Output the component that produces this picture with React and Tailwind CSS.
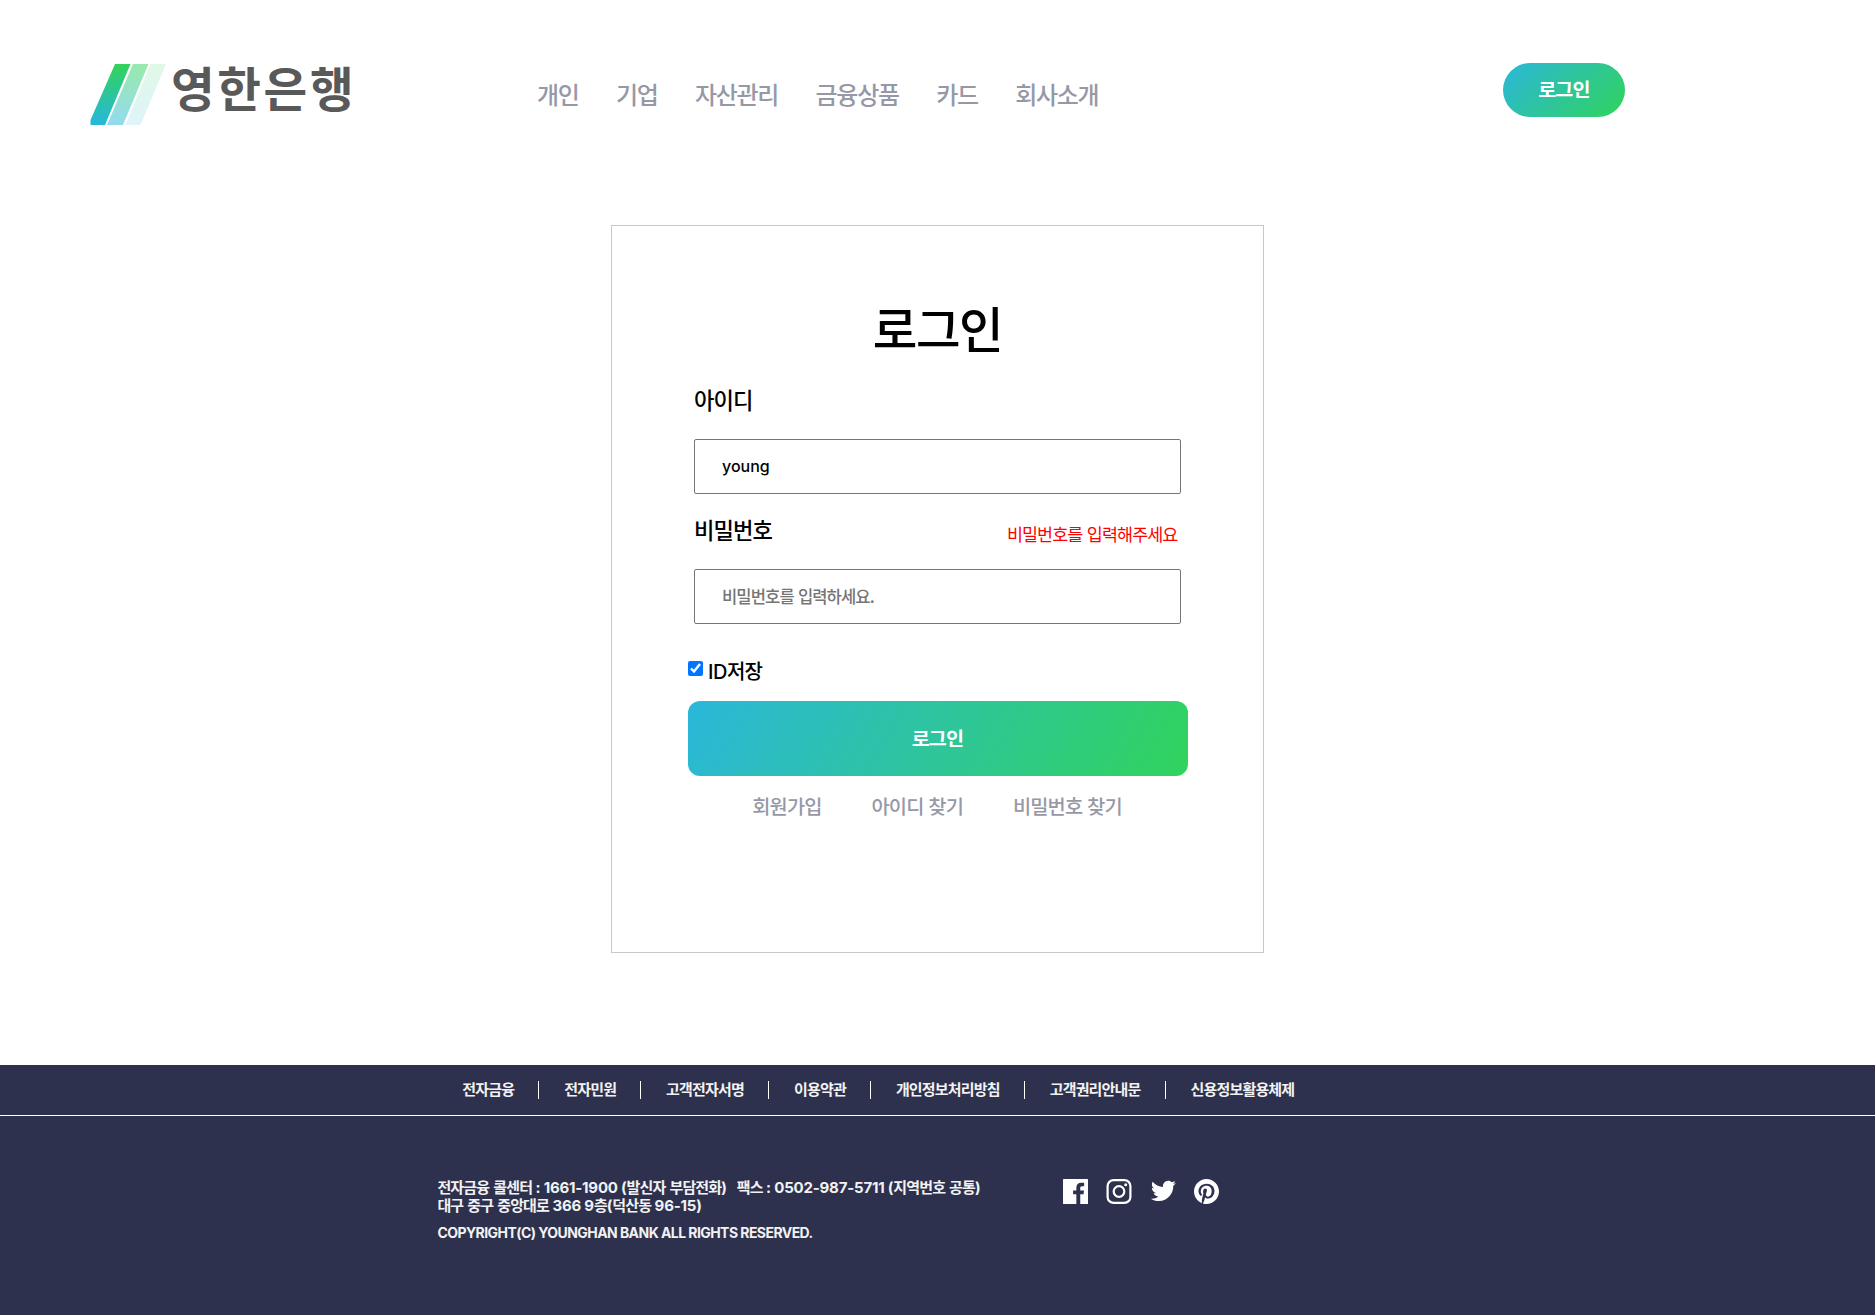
import React from "react";

const navItems = ["개인", "기업", "자산관리", "금융상품", "카드", "회사소개"];

const footerLinks = [
  "전자금융",
  "전자민원",
  "고객전자서명",
  "이용약관",
  "개인정보처리방침",
  "고객권리안내문",
  "신용정보활용체제",
];

function Logo() {
  return (
    <a href="#" className="flex items-start">
      <svg width="78" height="64" viewBox="0 0 78 64" className="block">
        <defs>
          <linearGradient id="stripe" x1="0" y1="0" x2="0" y2="1">
            <stop offset="0" stopColor="#32d35b" />
            <stop offset="1" stopColor="#27b7dc" />
          </linearGradient>
        </defs>
        <path d="M25 1H40.5L15 62H0.5V57Z" fill="url(#stripe)" />
        <path d="M43 1H58.5L33 62H17Z" fill="url(#stripe)" opacity="0.5" />
        <path d="M60.5 1H76L50.5 62H35.5Z" fill="url(#stripe)" opacity="0.15" />
      </svg>
      <span className="ml-[3px] mt-[-4px] text-[47.5px] leading-[56px] font-bold tracking-[2.6px] text-[#595959]">
        영한은행
      </span>
    </a>
  );
}

function Header() {
  return (
    <header className="flex h-[225px] items-start">
      <div className="ml-[90px] mt-[63px] w-[447px]">
        <Logo />
      </div>
      <nav className="mt-[77px] flex gap-[37.5px] text-[24px] leading-[34px] font-medium tracking-[-0.055em] text-[#9698a6]">
        {navItems.map((t) => (
          <a key={t} href="#">{t}</a>
        ))}
      </nav>
      <button className="mt-[63px] mr-[250px] ml-auto h-[54px] w-[122px] rounded-full bg-[linear-gradient(135deg,#2bb7da,#31d35c)] pb-[2px] text-[19.6px] font-bold tracking-[-0.04em] text-white">
        로그인
      </button>
    </header>
  );
}

function LoginCard() {
  return (
    <main className="mx-auto h-[728px] w-[653px] border border-[#c8c8c8]">
      <form className="mx-auto w-[500px] pt-[66px] tracking-[-0.055em] [word-spacing:0.08em]">
        <h1 className="text-center text-[48.5px] leading-[70px] font-medium tracking-[-0.03em] text-black">로그인</h1>
        <div className="mx-[6px]">
          <label className="mt-[22px] ml-[0.5px] block text-[22.2px] leading-[30px] font-medium text-black">아이디</label>
          <input
            type="text"
            defaultValue="young"
            className="mt-[25px] block h-[55px] w-[487px] rounded-[2px] border border-[#767676] pb-[2px] pl-[27.5px] font-['Inter'] text-[16px] font-medium tracking-normal text-black"
          />
          <div className="mt-[20px] flex items-start justify-between">
            <label className="ml-[0.5px] text-[22.2px] leading-[30px] font-medium text-black">비밀번호</label>
            <span className="mt-[6px] mr-[4px] text-[17.4px] leading-[28px] text-[#ff0000]">비밀번호를 입력해주세요</span>
          </div>
          <input
            type="password"
            placeholder="비밀번호를 입력하세요."
            className="mt-[21px] block h-[55px] w-[487px] rounded-[2px] border border-[#767676] pb-[2px] pl-[27.5px] text-[16.6px] font-medium tracking-[-0.055em] text-black [word-spacing:0.08em] placeholder:text-[#757575]"
          />
        </div>
        <label className="mt-[31px] flex h-[31px] items-start text-black">
          <input type="checkbox" defaultChecked className="mt-[6px] h-[15px] w-[15px]" />
          <span className="mt-[1px] ml-[5.5px] text-[20px] leading-[30px] font-medium">
            <span className="font-['Inter'] text-[20px] tracking-[-0.02em]">ID</span>저장
          </span>
        </label>
        <button
          type="button"
          className="mt-[15px] block h-[75px] w-full rounded-[12px] bg-[linear-gradient(120deg,#2bb7da,#31d35c)] pb-[2px] text-[19.6px] font-bold tracking-[-0.04em] text-white"
        >
          로그인
        </button>
        <div className="mt-[15px] flex justify-center gap-[50px] pr-[1px] text-[19.8px] leading-[30px] font-medium text-[#9698a6]">
          <a href="#">회원가입</a>
          <a href="#">아이디 찾기</a>
          <a href="#">비밀번호 찾기</a>
        </div>
      </form>
    </main>
  );
}

function FacebookIcon() {
  return (
    <svg width="25" height="25" viewBox="0 0 24 24" fill="#fff">
      <path d="M23.4 0H.6C.3 0 0 .3 0 .6v22.8c0 .3.3.6.6.6h12.22v-9.294H9.692v-3.622h3.128V8.413c0-3.1 1.893-4.788 4.659-4.788 1.325 0 2.463.099 2.795.143v3.24l-1.918.001c-1.504 0-1.795.715-1.795 1.763v2.313h3.587l-.467 3.622h-3.12V24h6.84c.3 0 .6-.3.6-.6V.6c0-.3-.3-.6-.6-.6z" />
    </svg>
  );
}

function InstagramIcon() {
  return (
    <svg width="25" height="25" viewBox="0.5 0 25 25" fill="none" stroke="#fff" className="overflow-visible">
      <rect x="1.1" y="1.1" width="22.8" height="22.8" rx="6" strokeWidth="2.2" />
      <circle cx="12.5" cy="12.5" r="5.3" strokeWidth="2.2" />
      <circle cx="19.2" cy="5.8" r="1.5" fill="#fff" stroke="none" />
    </svg>
  );
}

function TwitterIcon() {
  return (
    <svg width="25" height="25" viewBox="-0.8 -0.4 24 24" fill="#fff" className="overflow-visible">
      <path d="M24 3.557c-.883.392-1.832.656-2.828.775 1.017-.609 1.798-1.574 2.165-2.724-.951.564-2.005.974-3.127 1.195-.897-.957-2.178-1.555-3.594-1.555-3.179 0-5.515 2.966-4.797 6.045-4.091-.205-7.719-2.165-10.148-5.144-1.29 2.213-.669 5.108 1.523 6.574-.806-.026-1.566-.247-2.229-.616-.054 2.281 1.581 4.415 3.949 4.89-.693.188-1.452.232-2.224.084.626 1.956 2.444 3.379 4.6 3.419-2.07 1.623-4.678 2.348-7.29 2.04 2.179 1.397 4.768 2.212 7.548 2.212 9.142 0 14.307-7.721 13.995-14.646.962-.695 1.797-1.562 2.457-2.549z" />
    </svg>
  );
}

function PinterestIcon() {
  return (
    <svg width="25" height="25" viewBox="0 0 24 24" fill="#fff">
      <path d="M12 0C5.373 0 0 5.372 0 12c0 5.084 3.163 9.426 7.627 11.174-.105-.949-.2-2.405.042-3.441.218-.937 1.407-5.965 1.407-5.965s-.359-.719-.359-1.782c0-1.668.967-2.914 2.171-2.914 1.023 0 1.518.769 1.518 1.69 0 1.029-.655 2.568-.994 3.995-.283 1.194.599 2.169 1.777 2.169 2.133 0 3.772-2.249 3.772-5.495 0-2.873-2.064-4.882-5.012-4.882-3.414 0-5.418 2.561-5.418 5.207 0 1.031.397 2.138.893 2.738a.36.36 0 0 1 .083.345l-.333 1.36c-.053.22-.174.267-.402.161-1.499-.698-2.436-2.889-2.436-4.649 0-3.785 2.75-7.262 7.929-7.262 4.163 0 7.398 2.967 7.398 6.931 0 4.136-2.607 7.464-6.227 7.464-1.216 0-2.359-.631-2.75-1.378l-.748 2.853c-.271 1.043-1.002 2.35-1.492 3.146C9.57 23.812 10.763 24 12 24c6.627 0 12-5.373 12-12 0-6.628-5.373-12-12-12z" />
    </svg>
  );
}

function Latin({ children }) {
  return <span className="font-['Inter'] text-[15px] tracking-[-0.2px] [word-spacing:0]">{children}</span>;
}

function Footer() {
  return (
    <footer className="mt-[112px] h-[250px] bg-[#2e314d] text-[15px] font-bold tracking-[-0.055em] text-[#f2f2f2]">
      <div className="flex h-[51px] items-start border-b border-white pt-[16px] pl-[437.3px]">
        {footerLinks.map((t, i) => (
          <a
            key={t}
            href="#"
            className={
              i < footerLinks.length - 1
                ? "h-[18px] border-r border-white pr-[24px] pl-[25px] leading-[16px]"
                : "h-[18px] pl-[25px] leading-[16px]"
            }
          >
            {t}
          </a>
        ))}
      </div>
      <div className="flex items-start pt-[63px] pl-[437.4px]">
        <div className="w-[625.6px] whitespace-pre [word-spacing:0.09em]">
          <p className="h-[18px] leading-[16px]">
            전자금융 콜센터<Latin> : 1661-1900 (</Latin>발신자 부담전화<Latin>)</Latin>
            <span className="[word-spacing:0.05em]">{"   "}</span>팩스<Latin> : 0502-987-5711 (</Latin>지역번호 공통<Latin>)</Latin>
          </p>
          <p className="h-[18px] leading-[16px]">
            대구 중구 중앙대로<Latin> 366 9</Latin>층<Latin>(</Latin>덕산동<Latin> 96-15)</Latin>
          </p>
          <p className="mt-[9px] font-['Inter'] text-[14px] leading-[18px] tracking-[-0.56px] [word-spacing:0]">
            COPYRIGHT(C) YOUNGHAN BANK ALL RIGHTS RESERVED.
          </p>
        </div>
        <div className="flex gap-[18.6px]">
          <FacebookIcon />
          <InstagramIcon />
          <TwitterIcon />
          <PinterestIcon />
        </div>
      </div>
    </footer>
  );
}

export default function App() {
  return (
    <div className="min-h-[1315px] overflow-hidden bg-white font-['Noto_Sans_CJK_KR',sans-serif]">
      <Header />
      <LoginCard />
      <Footer />
    </div>
  );
}
